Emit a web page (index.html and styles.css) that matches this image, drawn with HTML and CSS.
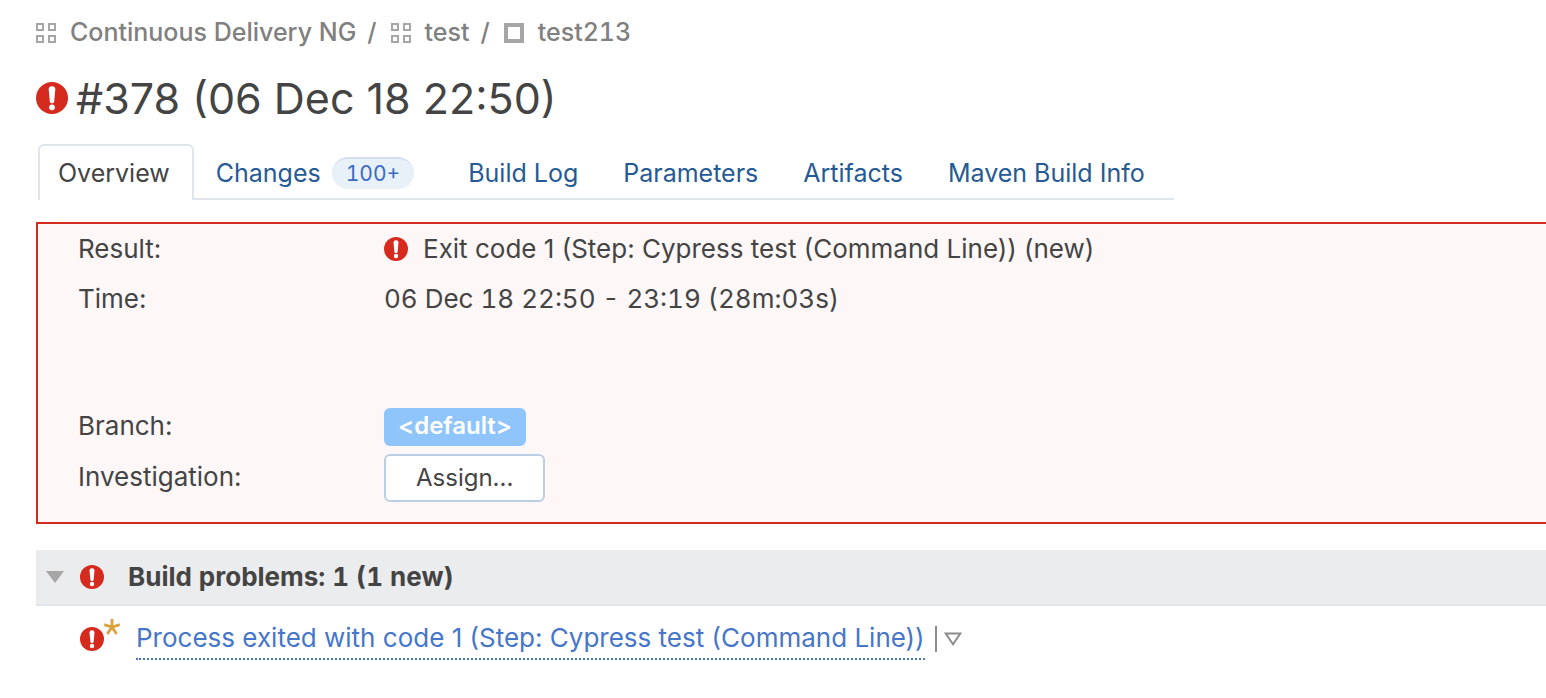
FILE: index.html
```html
<!DOCTYPE html>
<html lang="en">
<head>
<meta charset="utf-8">
<meta name="viewport" content="width=device-width, initial-scale=1">
<title>#378 (06 Dec 18 22:50)</title>
<link rel="stylesheet" href="styles.css">
</head>
<body>
<svg class="sprite" aria-hidden="true">
  <symbol id="error" viewBox="0 0 32 32">
    <circle cx="16" cy="16" r="16" fill="#d52b1e"/>
    <path d="M12.7 7.2Q12.7 4.2 16 4.2Q19.3 4.2 19.3 7.2L18.2 19.6Q18 21.4 16 21.4Q14 21.4 13.8 19.6Z" fill="#fff"/>
    <circle cx="16" cy="25.3" r="2.9" fill="#fff"/>
  </symbol>
  <symbol id="project" viewBox="0 0 20 20">
    <path d="M1 1h6v6H1zM13 1h6v6h-6zM1 13h6v6H1zM13 13h6v6h-6z" fill="none" stroke="#a6a6a6" stroke-width="2"/>
  </symbol>
  <symbol id="config" viewBox="0 0 20 20">
    <path d="M2 2h16v16H2z" fill="none" stroke="#a6a6a6" stroke-width="4"/>
  </symbol>
</svg>
<nav class="breadcrumbs" aria-label="Breadcrumbs">
  <svg class="crumb-icon"><use href="#project"/></svg>
  <a href="#project">Continuous Delivery NG</a>
  <span class="slash">/</span>
  <svg class="crumb-icon"><use href="#project"/></svg>
  <a href="#test">test</a>
  <span class="slash">/</span>
  <svg class="crumb-icon"><use href="#config"/></svg>
  <a href="#test213">test213</a>
</nav>
<main>
  <h1 class="title"><svg class="title-icon"><use href="#error"/></svg>#378 (06 Dec 18 22:50)</h1>
  <nav class="tabs" aria-label="Build">
    <a class="tab active" href="#overview" aria-current="page">Overview</a>
    <a class="tab changes" href="#changes">Changes <span class="count">100+</span></a>
    <a class="tab" href="#log">Build Log</a>
    <a class="tab" href="#parameters">Parameters</a>
    <a class="tab" href="#artifacts">Artifacts</a>
    <a class="tab" href="#maven">Maven Build Info</a>
  </nav>
  <dl class="summary">
    <dt>Result:</dt>
    <dd class="result"><svg class="status-icon"><use href="#error"/></svg>Exit code 1 (Step: Cypress test (Command Line)) (new)</dd>
    <dt>Time:</dt>
    <dd class="time">06 Dec 18 22:50 - 23:19 (28m:03s)</dd>
    <dt class="branch-label">Branch:</dt>
    <dd><span class="branch">&lt;default&gt;</span></dd>
    <dt class="investigation-label">Investigation:</dt>
    <dd><button class="assign" type="button">Assign...</button></dd>
  </dl>
  <section>
    <h2 class="problems-title">
      <svg class="collapse" viewBox="0 0 18 12"><path d="M0 0h18L9 12z" fill="#a6a6a6"/></svg>
      <svg class="status-icon"><use href="#error"/></svg>
      <span class="problems-label">Build problems: 1 (1 new)</span>
    </h2>
    <div class="problem">
      <svg class="status-icon"><use href="#error"/></svg>
      <svg class="new-mark" viewBox="0 0 16 16"><path d="M8 8V1.4M8 8L1.6 6.1M8 8l6.4-1.9M8 8l-3.8 5.8M8 8l3.8 5.8" fill="none" stroke="#dba13d" stroke-width="2.8" stroke-linecap="square"/></svg>
      <a class="problem-link" href="#problem">Process exited with code 1 (Step: Cypress test (Command Line))</a>
      <button class="menu" type="button" aria-label="Problem actions"><svg class="menu-icon" viewBox="0 0 18 14"><path d="M1.7 1.5h14.6L9 12.2z" fill="none" stroke="#8c8c8c" stroke-width="2"/></svg></button>
    </div>
  </section>
</main>
</body>
</html>
```
FILE: styles.css
```css
* { box-sizing: border-box; }
body {
  margin: 0;
  padding: 12px 0 0 36px;
  background: #fff;
  color: #444;
  font: 26px/40px Inter, "Liberation Sans", sans-serif;
  white-space: nowrap;
}
a { color: inherit; text-decoration: none; }
svg { flex: none; }
.sprite { display: none; }
.breadcrumbs {
  display: flex;
  align-items: center;
  color: #808080;
  font-size: 25px;
  font-weight: 500;
  font-variant-numeric: tabular-nums;
  line-height: 41px;
}
.crumb-icon { width: 20px; height: 20px; margin-right: 14px; }
.slash { margin: 0 14px 0 11px; }
.title {
  display: flex;
  align-items: center;
  gap: 8px;
  margin: 19px 0 0;
  font-size: 43px;
  line-height: 52px;
  font-weight: 400;
}
.title-icon { width: 32px; height: 32px; }
.tabs {
  display: flex;
  width: fit-content;
  margin: 20px 0 22px 2px;
  padding-right: 6px;
  border-bottom: 2px solid #dfe5eb;
  font-size: 25px;
}
.tab { height: 54px; padding: 8px 23px 4px 22px; color: #265a94; line-height: 42px; }
.tab.active {
  height: 56px;
  margin-bottom: -2px;
  padding: 6px 22px 6px 18px;
  border: 2px solid #dfe5eb;
  border-bottom: 0;
  border-radius: 6px 6px 0 0;
  background: #fff;
  color: #444;
}
.changes { display: flex; align-items: center; gap: 11px; padding-right: 32px; }
.count {
  height: 32px;
  padding: 0 14px;
  border-top: 2px solid #d4dff2;
  border-radius: 16px;
  background: #e8f0f8;
  color: #3a6bc0;
  font-size: 21px;
  font-variant-numeric: tabular-nums;
  line-height: 30px;
}
.summary {
  display: grid;
  grid-template-columns: 306px 1fr;
  row-gap: 8px;
  margin: 0;
  padding: 5px 0 20px 40px;
  border: 2px solid #d52b1e;
  border-right: 0;
  background: #fdf7f7;
}
.summary dt, .summary dd { margin: 0; }
.result { display: flex; align-items: center; gap: 15px; height: 42px; padding-bottom: 2px; }
.status-icon { width: 24px; height: 24px; }
.summary .time { margin-bottom: 81px; font-variant-numeric: tabular-nums; }
.branch-label { line-height: 36px; }
.investigation-label { line-height: 46px; }
.branch {
  display: block;
  width: fit-content;
  padding: 0 14px 2px;
  border-radius: 6px;
  background: #90c5fc;
  color: #fff;
  font-size: 24px;
  font-weight: 600;
  line-height: 36px;
}
.assign {
  display: block;
  height: 48px;
  padding: 0 30px;
  border: 2px solid #bacfe4;
  border-radius: 6px;
  background: #fff;
  color: #444;
  font: inherit;
  font-size: 24px;
}
.problems-title {
  display: flex;
  align-items: center;
  height: 56px;
  margin: 26px 0 0;
  padding-left: 10px;
  border-bottom: 2px solid #e1e6ea;
  background: #ebecee;
  font-size: 26px;
  font-weight: 700;
  font-variant-numeric: tabular-nums;
}
.collapse { width: 18px; height: 12px; margin-right: 16px; }
.problems-label { margin-left: 24px; }
.problem { display: flex; align-items: center; padding: 12px 0 0 44px; }
.new-mark { width: 16px; height: 16px; margin: 0 16px 24px 0; }
.problem-link { border-bottom: 2px dotted #4676ca; color: #4676ca; }
.menu {
  display: flex;
  align-items: center;
  height: 26px;
  margin-left: 10px;
  padding: 0 0 0 7px;
  border: 0;
  border-left: 2px solid #8c8c8c;
  background: none;
}
.menu-icon { width: 18px; height: 14px; }
```
